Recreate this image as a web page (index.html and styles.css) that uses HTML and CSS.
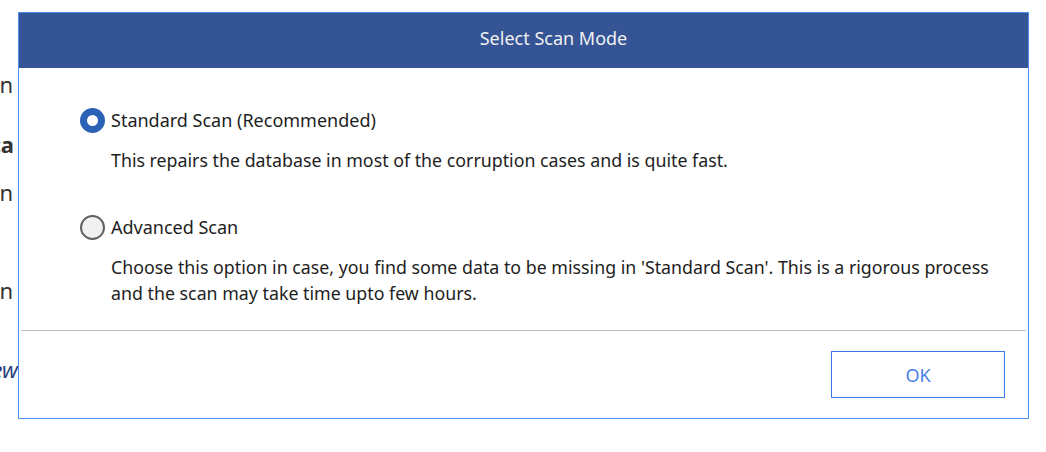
FILE: index.html
```html
<!DOCTYPE html>
<html>
<head>
<meta charset="utf-8">
<link rel="stylesheet" href="styles.css">
</head>
<body>
<div class="page">
  <div class="behind">
    <div class="bg-line l1"><span>Scan</span></div>
    <div class="bg-line l2"><span class="bold">Data</span></div>
    <div class="bg-line l3"><span>Scan</span></div>
    <div class="bg-line l4"><span>Scan</span></div>
    <div class="bg-line l5"><span class="link">Preview</span></div>
  </div>
  <div class="dialog">
    <div class="dialog-header">Select Scan Mode</div>
    <div class="dialog-body">
      <div class="option">
        <div class="option-row">
          <span class="radio checked"></span>
          <span class="option-label">Standard Scan (Recommended)</span>
        </div>
        <p class="option-desc">This repairs the database in most of the corruption cases and is quite fast.</p>
      </div>
      <div class="option second">
        <div class="option-row">
          <span class="radio"></span>
          <span class="option-label">Advanced Scan</span>
        </div>
        <p class="option-desc">Choose this option in case, you find some data to be missing in 'Standard Scan'. This is a rigorous process<br>and the scan may take time upto few hours.</p>
      </div>
    </div>
    <div class="separator"></div>
    <div class="dialog-footer">
      <button class="ok-btn">OK</button>
    </div>
  </div>
</div>
</body>
</html>
```

FILE: styles.css
```css
html, body {
  margin: 0;
  padding: 0;
  background: #ffffff;
}

body {
  font-family: "Noto Sans", "Open Sans", "Liberation Sans", sans-serif;
  color: #1e1e1e;
}

.page {
  display: flex;
  padding-top: 12px;
  width: 1046px;
  height: 452px;
  box-sizing: border-box;
}

.behind {
  width: 18px;
  flex: none;
  overflow: hidden;
  display: flex;
  flex-direction: column;
  padding-top: 58px;
}

.bg-line {
  display: flex;
  justify-content: flex-end;
  white-space: nowrap;
  font-size: 22px;
  line-height: 28px;
  color: #333333;
  padding-right: 5px;
}

.bg-line .bold { font-weight: 700; }
.bg-line .link { font-style: italic; color: #2a3f7e; }

.l2 { margin-top: 32px; padding-right: 4px; }
.l3 { margin-top: 20px; }
.l4 { margin-top: 70px; }
.l5 { margin-top: 51px; padding-right: 0; }

.dialog {
  width: 1011px;
  height: 407px;
  box-sizing: border-box;
  border: 1px solid #4c8ff0;
  display: flex;
  flex-direction: column;
  background: #ffffff;
}

.dialog-header {
  height: 55px;
  box-sizing: border-box;
  background: #345495;
  color: #f0f0f0;
  font-size: 18px;
  display: flex;
  align-items: center;
  justify-content: center;
  padding: 0 0 5px 60px;
}

.dialog-body {
  padding: 40px 0 0 61px;
  height: 262px;
  box-sizing: border-box;
}

.option-row {
  display: flex;
  align-items: center;
  height: 25px;
}

.radio {
  width: 25px;
  height: 25px;
  box-sizing: border-box;
  border-radius: 50%;
  border: 2px solid #606060;
  background: #f1f1f1;
  flex: none;
  margin-right: 6px;
}

.radio.checked {
  border: 7.5px solid #2b62b6;
  background: #ffffff;
}

.option-label {
  font-size: 18px;
  line-height: 25px;
}

.option-desc {
  margin: 14px 0 0 31px;
  font-size: 17.8px;
  line-height: 26px;
}

.option.second {
  margin-top: 42px;
}

.separator {
  height: 1px;
  background: #bdbdbd;
  margin: 0 2px;
}

.dialog-footer {
  flex: 1;
  display: flex;
  justify-content: flex-end;
  align-items: center;
  padding-right: 23px;
}

.ok-btn {
  width: 174px;
  height: 47px;
  border: 1px solid #3a78e6;
  background: #ffffff;
  color: #4a80e8;
  font-family: "Noto Sans", "Open Sans", sans-serif;
  font-size: 18px;
  padding: 0;
  cursor: pointer;
}
```
